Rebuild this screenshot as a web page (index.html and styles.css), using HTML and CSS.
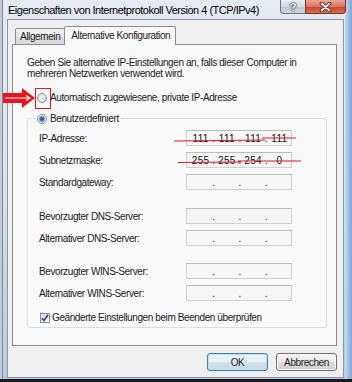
FILE: index.html
```html
<!DOCTYPE html>
<html lang="de">
<head>
  <meta charset="UTF-8">
  <title>Eigenschaften von Internetprotokoll Version 4 (TCP/IPv4)</title>
  <link rel="stylesheet" href="styles.css">
</head>
<body>
  <div class="window">
    <div class="titlebar">
      <span class="title">Eigenschaften von Internetprotokoll Version 4 (TCP/IPv4)</span>
      <div class="caption">
        <span class="cap-btn help">?</span>
        <span class="cap-btn close">
          <svg width="13" height="10" viewBox="0 0 13 10">
            <path d="M2.5 1.5 L10.5 8.5 M10.5 1.5 L2.5 8.5" stroke="#4a1a12" stroke-width="3.6" stroke-linecap="round"/>
            <path d="M2.5 1.5 L10.5 8.5 M10.5 1.5 L2.5 8.5" stroke="#fff" stroke-width="1.8" stroke-linecap="round"/>
          </svg>
        </span>
      </div>
    </div>

    <div class="client">
      <div class="tabs">
        <span class="tab">Allgemein</span>
        <span class="tab active">Alternative Konfiguration</span>
      </div>

      <div class="panel">
        <p class="intro">Geben Sie alternative IP-Einstellungen an, falls dieser Computer in<br>mehreren Netzwerken verwendet wird.</p>

        <div class="option auto"><span class="radio"></span>Automatisch zugewiesene, private IP-Adresse</div>

        <fieldset class="group">
          <legend class="option legend"><span class="radio checked"></span>Benutzerdefiniert</legend>

          <div class="block">
            <div class="row">
              <span class="lbl">IP-Adresse:</span>
              <span class="ip"><span class="seg">111</span><span class="dot">.</span><span class="seg">111</span><span class="dot">.</span><span class="seg">111</span><span class="dot">.</span><span class="seg">111</span></span>
            </div>
            <div class="row">
              <span class="lbl">Subnetzmaske:</span>
              <span class="ip"><span class="seg">255</span><span class="dot">.</span><span class="seg">255</span><span class="dot">.</span><span class="seg">254</span><span class="dot">.</span><span class="seg">0</span></span>
            </div>
            <div class="row">
              <span class="lbl">Standardgateway:</span>
              <span class="ip"><span class="seg"></span><span class="dot">.</span><span class="seg"></span><span class="dot">.</span><span class="seg"></span><span class="dot">.</span><span class="seg"></span></span>
            </div>
          </div>

          <div class="block dns">
            <div class="row">
              <span class="lbl">Bevorzugter DNS-Server:</span>
              <span class="ip"><span class="seg"></span><span class="dot">.</span><span class="seg"></span><span class="dot">.</span><span class="seg"></span><span class="dot">.</span><span class="seg"></span></span>
            </div>
            <div class="row">
              <span class="lbl">Alternativer DNS-Server:</span>
              <span class="ip"><span class="seg"></span><span class="dot">.</span><span class="seg"></span><span class="dot">.</span><span class="seg"></span><span class="dot">.</span><span class="seg"></span></span>
            </div>
          </div>

          <div class="block wins">
            <div class="row">
              <span class="lbl">Bevorzugter WINS-Server:</span>
              <span class="ip"><span class="seg"></span><span class="dot">.</span><span class="seg"></span><span class="dot">.</span><span class="seg"></span><span class="dot">.</span><span class="seg"></span></span>
            </div>
            <div class="row">
              <span class="lbl">Alternativer WINS-Server:</span>
              <span class="ip"><span class="seg"></span><span class="dot">.</span><span class="seg"></span><span class="dot">.</span><span class="seg"></span><span class="dot">.</span><span class="seg"></span></span>
            </div>
          </div>

          <div class="option check-row">
            <span class="checkbox">
              <svg width="8" height="8" viewBox="0 0 8 8"><path d="M1 4.2 L3 6.5 L7 0.8" fill="none" stroke="#1d3f7a" stroke-width="1.5"/></svg>
            </span>Geänderte Einstellungen beim Beenden überprüfen
          </div>
        </fieldset>
      </div>

      <div class="buttons">
        <span class="btn default">OK</span>
        <span class="btn">Abbrechen</span>
      </div>
    </div>

    <!-- red annotations drawn over the dialog -->
    <svg class="marks" width="352" height="382" viewBox="0 0 352 382">
      <polygon points="3,93 22,93 22,88 35,98 22,108 22,103 3,103" fill="#e8141c"/>
      <path d="M5 98 L30 98 M26 95.5 L30 98 L26 100.5" stroke="#fff" stroke-width="1.2" fill="none"/>
      <rect x="35.5" y="88.5" width="15" height="20" fill="none" stroke="#e8141c" stroke-width="1"/>
      <path d="M174 141 L265 140 M262 138 L296 138" stroke="#e8141c" stroke-width="1.2" fill="none"/>
      <path d="M178 162.5 L241 162 M238 161 L301 161" stroke="#e8141c" stroke-width="1.2" fill="none"/>
    </svg>
  </div>
</body>
</html>
```

FILE: styles.css
```css
* {
  box-sizing: border-box;
}

body {
  margin: 0;
  font-family: "Liberation Sans", Arial, sans-serif;
  font-size: 10px;
  letter-spacing: -0.4px;
  color: #1b1b1b;
}

.window {
  position: relative;
  width: 352px;
  height: 382px;
  display: flex;
  flex-direction: column;
  padding: 0 8px 1px 7px;
  border-bottom: 3px solid #161a1f;
  background:
    linear-gradient(90deg, transparent 345px, #c9daee 345px, #a6c3e6 348px, #86aad8 351px),
    linear-gradient(180deg, #e6ebf1 0%, #dbe4ee 45%, #b3cbe5 100%);
  box-shadow: inset 2px 0 0 #c3ccd6, inset 3px 0 0 #7d8895;
}

/* title bar */
.titlebar {
  height: 19px;
  display: flex;
  justify-content: space-between;
  align-items: flex-start;
}

.title {
  padding: 3px 0 0 1px;
  font-size: 11px;
  line-height: 14px;
  letter-spacing: -0.5px;
  color: #000;
}

.caption {
  display: flex;
  margin-right: -2px;
}

.cap-btn {
  height: 14px;
  display: flex;
  align-items: center;
  justify-content: center;
  border: 1px solid #6c7683;
  border-top: none;
}

.help {
  width: 25px;
  border-right: none;
  border-radius: 0 0 0 4px;
  background: linear-gradient(#e9eef4, #cfd7e0 50%, #bcc6d1 51%, #cdd5de);
  color: #fff;
  font-weight: bold;
  font-size: 11px;
  text-shadow: 0 0 1px #2d3540, 0 0 1px #2d3540, 0 0 2px #2d3540;
}

.close {
  width: 41px;
  border-color: #7a2f25;
  border-radius: 0 0 4px 0;
  background: linear-gradient(#eaa698, #d9735f 50%, #c5432d 51%, #d97152);
}

/* dialog body */
.client {
  flex: 1;
  display: flex;
  flex-direction: column;
  background: #f0f0f0;
  border: 1px solid #8b96a3;
  padding: 6px 6px 6px 4px;
}

.tabs {
  display: flex;
  align-items: flex-end;
  height: 19px;
  margin-bottom: -1px;
  padding-left: 3px;
  position: relative;
  z-index: 1;
}

.tab {
  height: 16px;
  margin-bottom: 1px;
  padding: 0 4px;
  line-height: 15px;
  border: 1px solid #898c95;
  border-bottom: none;
  border-radius: 2px 2px 0 0;
  background: linear-gradient(#f3f3f3, #e8e8e8 50%, #dcdcdc 51%, #dadada);
}

.tab.active {
  height: 19px;
  margin-bottom: 0;
  margin-left: -1px;
  padding: 0 5px 0 6px;
  line-height: 17px;
  background: #f9f9f9;
}

.panel {
  flex: 1;
  border: 1px solid #898c95;
  background: #f9f9f9;
  padding: 12px 10px 0 14px;
}

.intro {
  margin: 0;
  line-height: 11px;
}

.option {
  display: flex;
  align-items: center;
  height: 13px;
}

.auto {
  margin-top: 12px;
  padding-left: 10px;
}

.radio {
  flex: none;
  width: 10px;
  height: 10px;
  margin-right: 3px;
  border: 1px solid #8d8f93;
  border-radius: 50%;
  background: radial-gradient(circle, #f8f8f8 0, #e4e4e4 70%, #d6d6d6 100%);
}

.radio.checked {
  background: radial-gradient(circle, #1e4a82 0, #2f6aab 1.5px, #8dbbe6 3px, #e9eef3 3.6px, #dcdcdc 100%);
}

.group {
  margin: 8px 0 0;
  padding: 5px 0 3px 11px;
  width: 300px;
  border: 1px solid #d5dfe5;
  border-radius: 3px;
}

.legend {
  margin-left: -3px;
  padding: 0 2px 0 1px;
}

.block + .block {
  margin-top: 17px;
}

.block.dns {
  margin-top: 18px;
}

.row {
  display: flex;
  align-items: center;
  height: 16px;
}

.row + .row {
  margin-top: 6px;
}

.lbl {
  width: 147px;
}

.ip {
  width: 106px;
  height: 16px;
  display: flex;
  align-items: center;
  padding-left: 2px;
  border: 1px solid #cdd0d4;
  border-top-color: #b9bdc2;
  background: #f6f6f6;
  letter-spacing: 0.3px;
  color: #111;
}

.seg {
  flex: 1;
  text-align: center;
}

.dot {
  width: 3px;
  text-align: center;
}

.check-row {
  margin-top: 10px;
  padding-left: 1px;
}

.checkbox {
  flex: none;
  width: 10px;
  height: 10px;
  margin-right: 2px;
  display: flex;
  align-items: center;
  justify-content: center;
  border: 1px solid #8e8f8f;
  background: linear-gradient(135deg, #dcdcdc, #f6f6f6);
}

/* buttons */
.buttons {
  display: flex;
  justify-content: flex-end;
  gap: 8px;
  margin-top: 7px;
}

.btn {
  width: 61px;
  height: 18px;
  display: flex;
  align-items: center;
  justify-content: center;
  border: 1px solid #707070;
  border-radius: 3px;
  background: linear-gradient(#f2f2f2 0, #ebebeb 50%, #dddddd 51%, #cfcfcf 100%);
  box-shadow: inset 0 0 0 1px #fbfbfb;
}

.btn.default {
  border-color: #3c7fb1;
  background: linear-gradient(#eef5fa 0, #e3eef6 50%, #d2e3ef 51%, #c5dae9 100%);
  box-shadow: inset 0 0 0 1px #b9e4f8;
}

.marks {
  position: absolute;
  top: 0;
  left: 0;
  pointer-events: none;
}
```
